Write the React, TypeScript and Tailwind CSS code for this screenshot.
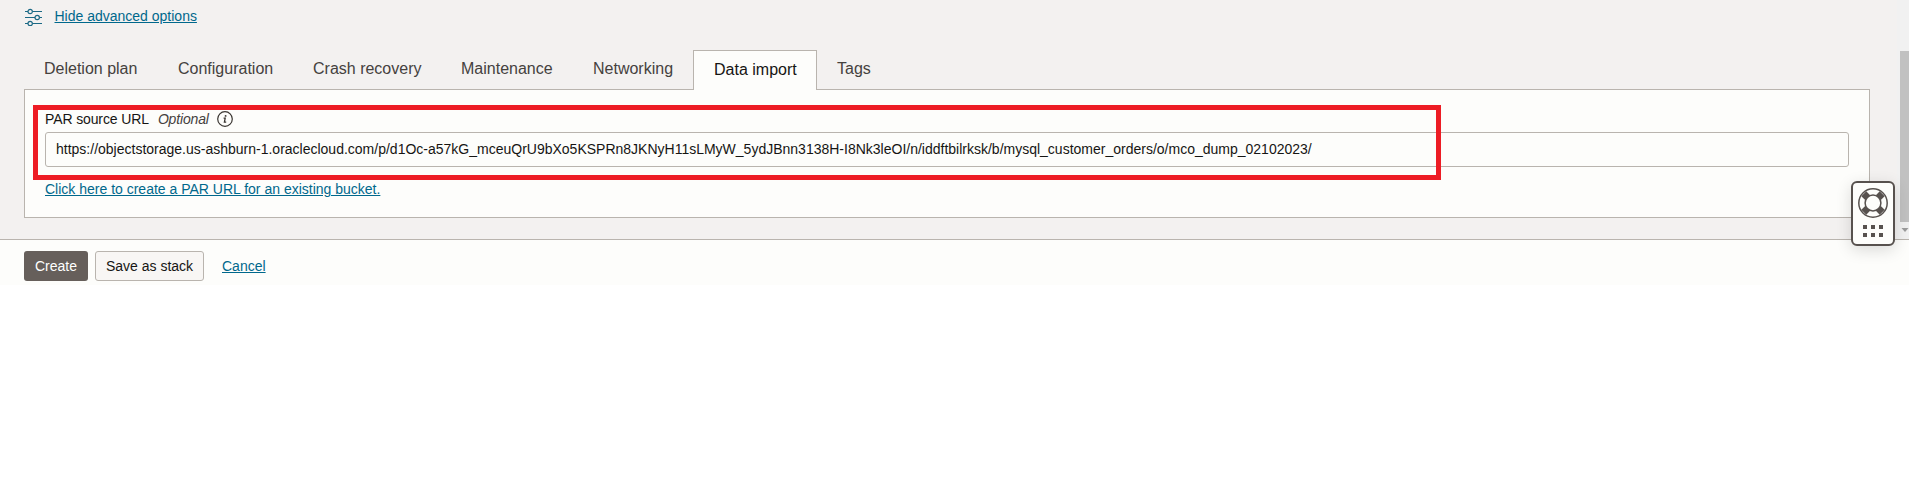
import React from "react";

const url =
  "https://objectstorage.us-ashburn-1.oraclecloud.com/p/d1Oc-a57kG_mceuQrU9bXo5KSPRn8JKNyH11sLMyW_5ydJBnn3138H-I8Nk3leOI/n/iddftbilrksk/b/mysql_customer_orders/o/mco_dump_02102023/";

const tabs = [
  { label: "Deletion plan", width: "w-[134px]" },
  { label: "Configuration", width: "w-[135px]" },
  { label: "Crash recovery", width: "w-[148px]" },
  { label: "Maintenance", width: "w-[132px]" },
  { label: "Networking", width: "w-[120px]" },
  { label: "Data import", width: "w-[124px]", active: true },
  { label: "Tags", width: "w-[75px]" },
];

function SlidersIcon() {
  return (
    <svg className="size-[18px] shrink-0" viewBox="0 0 18 18" fill="none" stroke="#1b6985" strokeWidth="1">
      <path d="M0 3.5h3M8 3.5h9M0 9.5h10M15 9.5h2M0 15.5h3M8 15.5h9" />
      <circle cx="5.2" cy="3.5" r="2.2" strokeWidth="1.2" />
      <circle cx="12.2" cy="9.5" r="2.2" strokeWidth="1.2" />
      <circle cx="5.2" cy="15.5" r="2.2" strokeWidth="1.2" />
    </svg>
  );
}

function InfoIcon() {
  return (
    <svg className="size-4 shrink-0" viewBox="0 0 16 16" fill="none">
      <circle cx="8" cy="8" r="7.3" stroke="#3a3632" strokeWidth="1.2" />
      <circle cx="8.6" cy="4.9" r="0.95" fill="#3a3632" />
      <path d="M6.6 7.1h1.6L7.4 11.1H9.2" stroke="#3a3632" strokeWidth="1.3" />
    </svg>
  );
}

function LifebuoyIcon() {
  return (
    <svg className="size-[30px]" viewBox="0 0 30 30" fill="none">
      <g stroke="#57514e">
        <path d="M5.8 5.8l4.6 4.6M24.2 5.8l-4.6 4.6M5.8 24.2l4.6-4.6M24.2 24.2l-4.6-4.6" strokeWidth="7" />
        <circle cx="15" cy="15" r="14.2" strokeWidth="1.5" />
        <circle cx="15" cy="15" r="7.9" fill="#fdfdfb" strokeWidth="1.5" />
      </g>
    </svg>
  );
}

export default function App() {
  return (
    <div className="relative h-[498px] w-full overflow-hidden bg-white font-['Liberation_Sans',Arial,sans-serif] text-sm text-[#161513]">
      <div className="flex h-[239px] w-[1909px] bg-[#f3f1f0]">
        <main className="flex w-[1897px] flex-col pl-6">
          <div className="flex h-[50px] items-start pl-px pt-2">
            <SlidersIcon />
            <a href="#" className="ml-[11.5px] mt-[-2px] leading-5 text-[#00688c] underline">Hide advanced options</a>
          </div>
          <nav className="z-10 flex h-10 text-base">
            {tabs.map((t) => (
              <button
                key={t.label}
                className={`${t.width} whitespace-nowrap text-left ${
                  t.active
                    ? "border border-b-0 border-[#b9b4ae] bg-[#fdfdfb] pb-px pl-5 text-[#161513]"
                    : "pb-[3px] pl-5 text-[#45413e]"
                }`}
              >
                {t.label}
              </button>
            ))}
          </nav>
          <section className="-mt-px h-[129px] w-[1846px] border border-[#b9b4ae] bg-[#fdfdfb] px-5 pt-[18px]">
            <div className="flex h-[22px] items-center">
              <label className="tracking-[-0.12px]">PAR source URL</label>
              <em className="ml-[9px] tracking-[-0.15px] text-[#45413e]">Optional</em>
              <span className="ml-2">
                <InfoIcon />
              </span>
            </div>
            <div className="mt-[2px] flex h-[35px] items-center rounded-[3px] border border-[#b9b4ae] pb-[2px] pl-[10px]">
              <span className="whitespace-nowrap">{url}</span>
            </div>
            <a href="#" className="mt-3 inline-block leading-5 text-[#00688c] underline">
              Click here to create a PAR URL for an existing bucket.
            </a>
          </section>
        </main>
        <div className="flex w-3 flex-col items-end bg-[#f1f1f1] pt-[51px]">
          <div className="h-[171px] w-[9px] bg-[#c1c1c1]" />
          <svg className="mt-[6px] h-1 w-2" viewBox="0 0 8 4">
            <path d="M0.5 0h7L4 4z" fill="#9c9c9c" />
          </svg>
        </div>
      </div>
      <footer className="flex h-[46px] w-[1909px] items-start border-t border-[#b9b4ae] bg-[#fdfdfb] pl-6 pt-[11px]">
        <button className="h-[30px] w-16 rounded-[3px] bg-[#665f5b] text-white">Create</button>
        <button className="ml-[7px] h-[30px] w-[109px] whitespace-nowrap rounded-[3px] border border-[#b9b4ae] bg-[#f8f6f4]">
          Save as stack
        </button>
        <a href="#" className="ml-[18px] leading-[30px] text-[#00688c] underline">Cancel</a>
      </footer>
      <div className="pointer-events-none absolute left-[33px] top-[105px] z-20 h-[75px] w-[1408px] border-[5px] border-[#ed1c24]" />
      <div className="absolute left-[1851px] top-[181px] z-20 flex h-[65px] w-11 flex-col items-center rounded-md border-2 border-[#57514e] bg-[#fdfdfb] pt-[5px] shadow-[0_4px_16px_rgba(0,0,0,0.14)]">
        <LifebuoyIcon />
        <div className="mt-[7px] grid grid-cols-3 gap-1">
          {[0, 1, 2, 3, 4, 5].map((n) => (
            <span key={n} className="size-1 bg-[#57514e]" />
          ))}
        </div>
      </div>
    </div>
  );
}
